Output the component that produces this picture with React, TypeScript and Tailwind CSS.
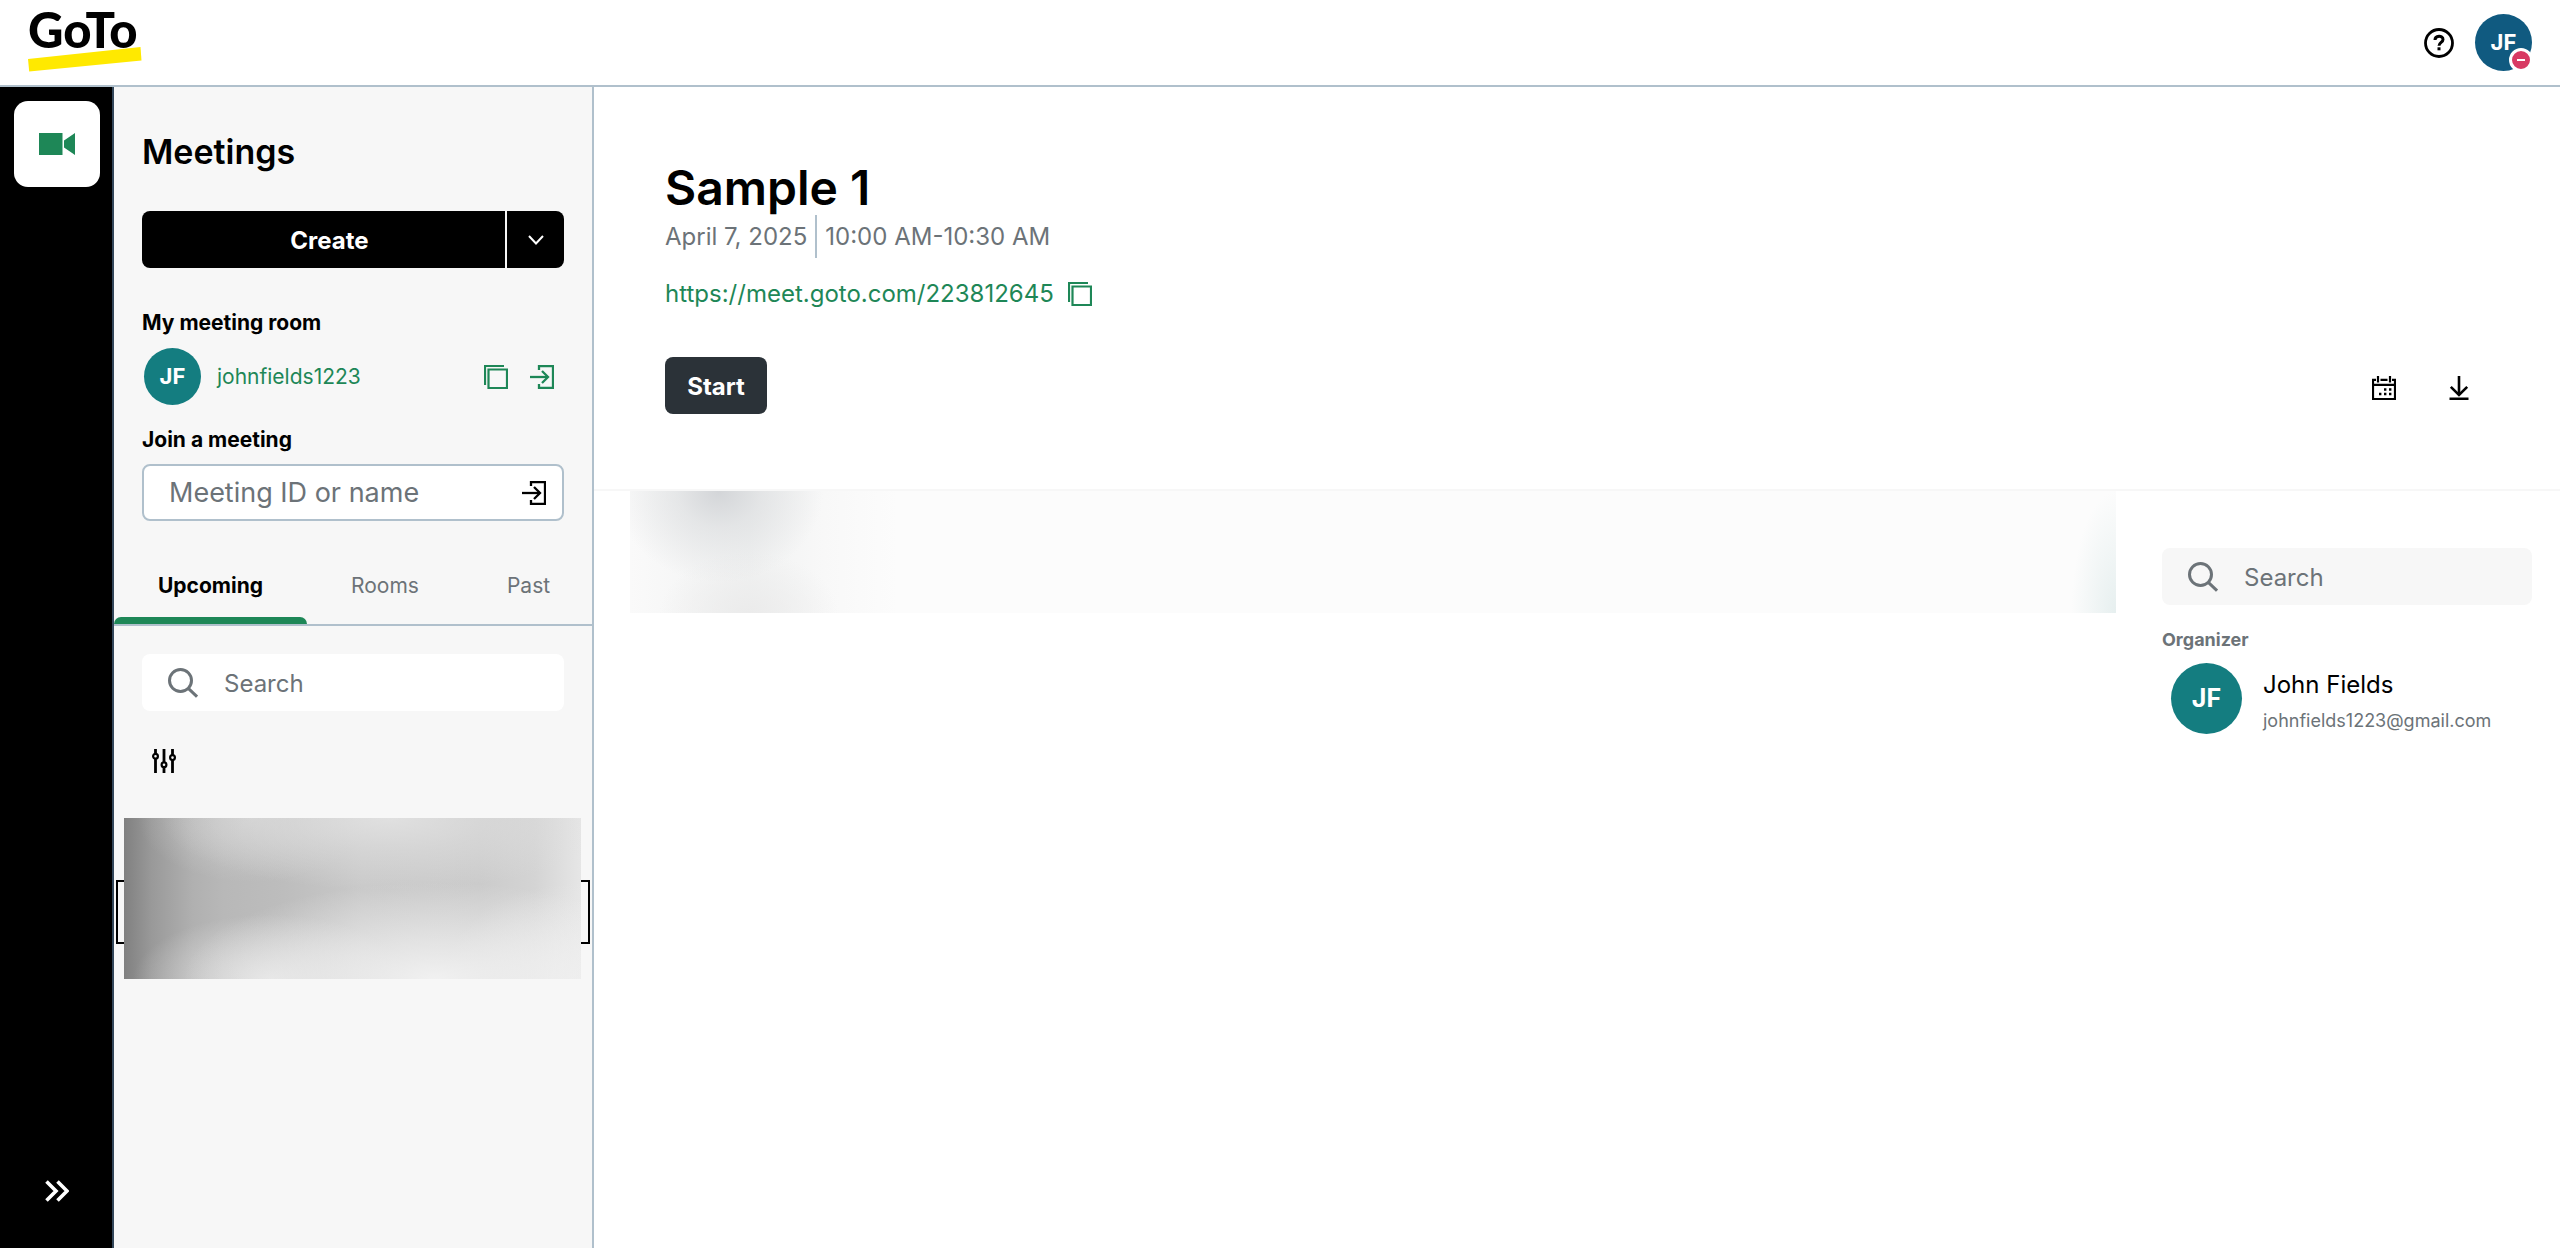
import { useState } from "react";
import clsx from "clsx";

interface IconProps {
  className?: string;
}

function CopyIcon({ className }: IconProps) {
  return (
    <svg viewBox="0 0 24 24" className={clsx("size-6", className)} fill="none" stroke="currentColor" strokeWidth="2.2">
      <path d="M1 20V1h19" />
      <path d="M4.5 4.5h18.5v18.5H4.5z" />
    </svg>
  );
}

function EnterIcon({ className }: IconProps) {
  return (
    <svg viewBox="0 0 24 24" className={clsx("size-6", className)} fill="none" stroke="currentColor" strokeWidth="2.3">
      <path d="M9 5V1h14v22H9v-4" />
      <path d="M0 12h18" />
      <path d="M12 6l6 6-6 6" />
    </svg>
  );
}

function SearchIcon({ className }: IconProps) {
  return (
    <svg viewBox="0 0 30 30" className={clsx("size-[30px]", className)} fill="none" stroke="currentColor" strokeWidth="3">
      <circle cx="12.5" cy="12.5" r="11" />
      <path d="M20.3 20.3l8.7 8.4" />
    </svg>
  );
}

function FiltersIcon() {
  return (
    <svg viewBox="0 0 24 24" className="size-6" fill="none" stroke="currentColor" strokeWidth="2.8">
      <path d="M3.5 0v5M3.5 10v14M12 0v13M12 18v6M20.5 0v6M20.5 11v13" />
      <circle cx="3.5" cy="7.3" r="2.4" strokeWidth="2.2" />
      <circle cx="12" cy="15.8" r="2.4" strokeWidth="2.2" />
      <circle cx="20.5" cy="8.6" r="2.4" strokeWidth="2.2" />
    </svg>
  );
}

function CalendarIcon() {
  return (
    <svg viewBox="0 0 24 24" className="size-6" fill="none" stroke="currentColor" strokeWidth="2.2">
      <path d="M4 3.8H1V23h22V3.8h-3M8.5 3.8h7M1 8.8h22" />
      <path d="M6 0v6.5M18 0v6.5" />
      <path d="M12 13.5h2.4M17 13.5h2.4M7 18h2.4M12 18h2.4M17 18h2.4" strokeWidth="2.4" />
    </svg>
  );
}

function DownloadIcon() {
  return (
    <svg viewBox="0 0 24 24" className="size-6" fill="none" stroke="currentColor" strokeWidth="2.6">
      <path d="M12 0v19" />
      <path d="M3.8 10.8l8.2 8.2 8.2-8.2" />
      <path d="M2.5 22.8h19" />
    </svg>
  );
}

function HelpIcon() {
  return (
    <svg viewBox="0 0 30 30" className="size-[30px]" fill="none" stroke="currentColor">
      <circle cx="15" cy="15" r="13.5" strokeWidth="2.8" />
      <path d="M11 12c0-5 8-5 8-.6 0 3-4 3-4 6.4" strokeWidth="3" />
      <path d="M15 19.3v3" strokeWidth="3" />
    </svg>
  );
}

function Logo() {
  return (
    <svg viewBox="0 -14 114 85" className="h-[85px] w-[114px]" role="img" aria-label="GoTo">
      <path d="M0 45l112.500-12 1 13.500L1.200 57.500z" fill="#ffe900" />
      <text x="0" y="34" fontFamily="Lato, sans-serif" fontWeight="900" fontSize="49" fill="#000">
        GoTo
      </text>
    </svg>
  );
}

const tabs = ["Upcoming", "Rooms", "Past"];

function SearchBox({ id, className }: { id: string; className: string }) {
  return (
    <label
      htmlFor={id}
      className={clsx("flex h-[57px] items-center gap-[26px] rounded-lg pl-[26px] text-[#6c7378]", className)}
    >
      <SearchIcon className="shrink-0" />
      <input
        id={id}
        type="text"
        aria-label="Search"
        placeholder="Search"
        className="w-full min-w-0 bg-transparent pt-0.5 text-[24px] outline-none placeholder:text-[#6c7378]"
      />
    </label>
  );
}

function Header() {
  return (
    <header className="flex h-[87px] shrink-0 items-center justify-between border-b-2 border-[#b0c0cc] pr-7 pl-7">
      <a href="#" className="block">
        <Logo />
      </a>
      <div className="flex items-center gap-[21px]">
        <button type="button" aria-label="Help">
          <HelpIcon />
        </button>
        <button
          type="button"
          className="relative size-[57px] rounded-full bg-[#105a80] text-[22px] font-bold text-white"
        >
          JF
          <span className="absolute -right-px -bottom-px flex size-6 items-center justify-center rounded-full border-[3px] border-white bg-[#d83a63]">
            <span className="h-0.5 w-2 bg-white" />
          </span>
        </button>
      </div>
    </header>
  );
}

function Rail() {
  return (
    <nav className="flex w-[114px] shrink-0 flex-col items-center justify-between border-r-2 border-[#33475a] bg-black pt-[14px] pb-[46px] pl-0.5">
      <button
        type="button"
        aria-label="Meetings"
        className="flex size-[86px] items-center justify-center rounded-[14px] bg-white text-[#1e8757]"
      >
        <svg viewBox="0 0 36 22" className="h-[22px] w-9" fill="currentColor">
          <path d="M0 0h23.500v22H0zM25 7.500L36 0v22l-11-7.500z" />
        </svg>
      </button>
      <button type="button" aria-label="Expand" className="text-white">
        <svg viewBox="0 0 24 22" className="h-[22px] w-6" fill="none" stroke="currentColor" strokeWidth="3.600">
          <path d="M1.500 1.500L11 11l-9.500 9.500M12.500 1.500L22 11l-9.500 9.500" />
        </svg>
      </button>
    </nav>
  );
}

function Sidebar() {
  const [active, setActive] = useState("Upcoming");

  return (
    <aside className="w-[480px] shrink-0 border-r-2 border-[#b0c0cc] bg-[#f7f7f7] pt-[45px]">
      <div className="px-7">
        <h2 className="text-[34px] leading-10 font-semibold">Meetings</h2>
        <div className="mt-[39px] flex h-[57px] gap-0.5 text-white">
          <button type="button" className="flex-1 rounded-l-lg bg-black pt-0.5 pl-3 text-[24px] font-bold">
            Create
          </button>
          <button
            type="button"
            aria-label="More options"
            className="flex w-[57px] items-center justify-center rounded-r-lg bg-black"
          >
            <svg viewBox="0 0 16 10" className="h-[10px] w-4" fill="none" stroke="currentColor" strokeWidth="2">
              <path d="M1 1l7 7.500L15 1" />
            </svg>
          </button>
        </div>

        <h3 className="mt-[41px] text-[21px] leading-7 font-bold">My meeting room</h3>
        <div className="mt-[11px] flex h-[57px] items-center pr-[10px] pl-0.5 text-[#1e8757]">
          <span className="flex size-[57px] items-center justify-center rounded-full bg-[#147d80] text-[22px] font-bold text-white">
            JF
          </span>
          <a href="#" className="ml-4 text-[21px]">
            johnfields1223
          </a>
          <button type="button" aria-label="Copy link" className="ml-auto">
            <CopyIcon />
          </button>
          <button type="button" aria-label="Enter room" className="ml-[22px]">
            <EnterIcon />
          </button>
        </div>

        <label htmlFor="meeting" className="mt-[21px] block text-[21px] leading-7 font-bold">
          Join a meeting
        </label>
        <div className="mt-[10px] flex h-[57px] items-center rounded-lg border-2 border-[#b0c0cc] bg-white pr-4 pl-[25px]">
          <input
            id="meeting"
            type="text"
            placeholder="Meeting ID or name"
            className="w-full min-w-0 pt-0.5 text-[27px] outline-none placeholder:text-[#6c7378]"
          />
          <button type="button" aria-label="Join">
            <EnterIcon />
          </button>
        </div>
      </div>

      <div role="tablist" className="mt-[27px] flex justify-between border-b-2 border-[#b0c0cc]">
        {tabs.map((tab) => (
          <button
            key={tab}
            type="button"
            role="tab"
            aria-selected={tab === active}
            onClick={() => setActive(tab)}
            className={clsx(
              "relative h-[76px] px-11 text-[21px]",
              tab === active ? "font-bold text-black" : "text-[#6c7378]"
            )}
          >
            {tab}
            {tab === active && (
              <span className="absolute inset-x-0 bottom-0 h-[7px] rounded-t-lg bg-[#1e8757]" />
            )}
          </button>
        ))}
      </div>

      <div className="px-7">
        <SearchBox id="meeting-search" className="mt-7 bg-white" />
        <button type="button" aria-label="Filters" className="mt-[38px] ml-[10px] block">
          <FiltersIcon />
        </button>
      </div>

      {/* selected meeting, content obscured */}
      <div className="relative mt-[45px]">
        <div className="absolute inset-x-0.5 top-[62px] h-16 border-2 border-black" />
        <div className="relative mr-[11px] ml-[10px] h-[161px] bg-[radial-gradient(ellipse_55%_60%_at_68%_100%,#f1f1f1,#f1f1f1a0_40%,#f1f1f100),radial-gradient(ellipse_50%_45%_at_58%_0%,#e0e0e0,#e0e0e080_45%,#e0e0e000),radial-gradient(ellipse_25%_40%_at_28%_0%,#dadadaa0,#dadada00),radial-gradient(ellipse_30%_40%_at_32%_100%,#e2e2e2,#e2e2e280_50%,#e2e2e200),radial-gradient(ellipse_30%_60%_at_100%_100%,#ececec,#ececec00),linear-gradient(to_right,#808080,#999999_6%,#b0b0b0_15%,#b8b8b8_22%,#bdbdbd_35%,#c9c9c9_52%,#cbcbcb_78%,#d4d4d4_90%,#e6e6e6)]" />
      </div>
    </aside>
  );
}

function MeetingDetails() {
  return (
    <section className="border-b-2 border-[#f7f7f7] px-[71px] pt-[74px] pb-[75px]">
      <h1 className="text-[48px] leading-[54px] font-semibold">Sample 1</h1>
      <div className="flex h-[43px] items-center text-[24px] text-[#6c7378]">
        <span>April 7, 2025</span>
        <span className="mx-2 h-full w-0.5 bg-[#b0c0cc]" />
        <span>10:00 AM-10:30 AM</span>
      </div>
      <div className="mt-5 flex h-8 items-center gap-[14px] text-[#1e8757]">
        <a href="#" className="text-[24px]">
          https://meet.goto.com/223812645
        </a>
        <button type="button" aria-label="Copy meeting link">
          <CopyIcon />
        </button>
      </div>
      <div className="mt-[47px] flex items-center">
        <button
          type="button"
          className="h-[57px] w-[102px] rounded-lg bg-[#2b3238] pt-0.5 text-[24px] font-bold text-white"
        >
          Start
        </button>
        <div className="mr-[18px] ml-auto flex gap-[51px] pt-1">
          <button type="button" aria-label="Add to calendar">
            <CalendarIcon />
          </button>
          <button type="button" aria-label="Download">
            <DownloadIcon />
          </button>
        </div>
      </div>
    </section>
  );
}

function Attendees() {
  return (
    <aside className="w-[444px] shrink-0 pt-[57px] pr-7 pl-[46px]">
      <SearchBox id="attendee-search" className="bg-[#f7f7f7]" />
      <h3 className="mt-[23px] text-[18px] leading-6 font-bold text-[#6c7378]">Organizer</h3>
      <div className="mt-[11px] flex gap-[21px] pl-[9px]">
        <span className="flex size-[71px] items-center justify-center rounded-full bg-[#147d80] text-[25px] font-bold text-white">
          JF
        </span>
        <div className="pt-1">
          <p className="text-[24px] leading-9">John Fields</p>
          <p className="text-[18px] leading-9 text-[#6c7378]">johnfields1223@gmail.com</p>
        </div>
      </div>
    </aside>
  );
}

export default function App() {
  return (
    <div className="flex min-h-screen flex-col bg-white font-['Inter',sans-serif] text-black">
      <Header />
      <div className="flex flex-1">
        <Rail />
        <Sidebar />
        <main className="min-w-0 flex-1">
          <MeetingDetails />
          <div className="flex pl-9">
            <div className="h-[122px] flex-1 bg-[radial-gradient(ellipse_7%_75%_at_6%_0%,#d3d5d8,#d8dadc90_40%,#e4e6e600),radial-gradient(ellipse_6%_50%_at_8%_100%,#ebebeb,#ebebeb00),radial-gradient(ellipse_3%_100%_at_100%_100%,#e6efef,#e6efef00),linear-gradient(to_right,#fafafa,#f1f2f2_8%,#f8f8f8_13%,#fcfcfc_18%,#fcfcfc)]" />
            <Attendees />
          </div>
        </main>
      </div>
    </div>
  );
}
